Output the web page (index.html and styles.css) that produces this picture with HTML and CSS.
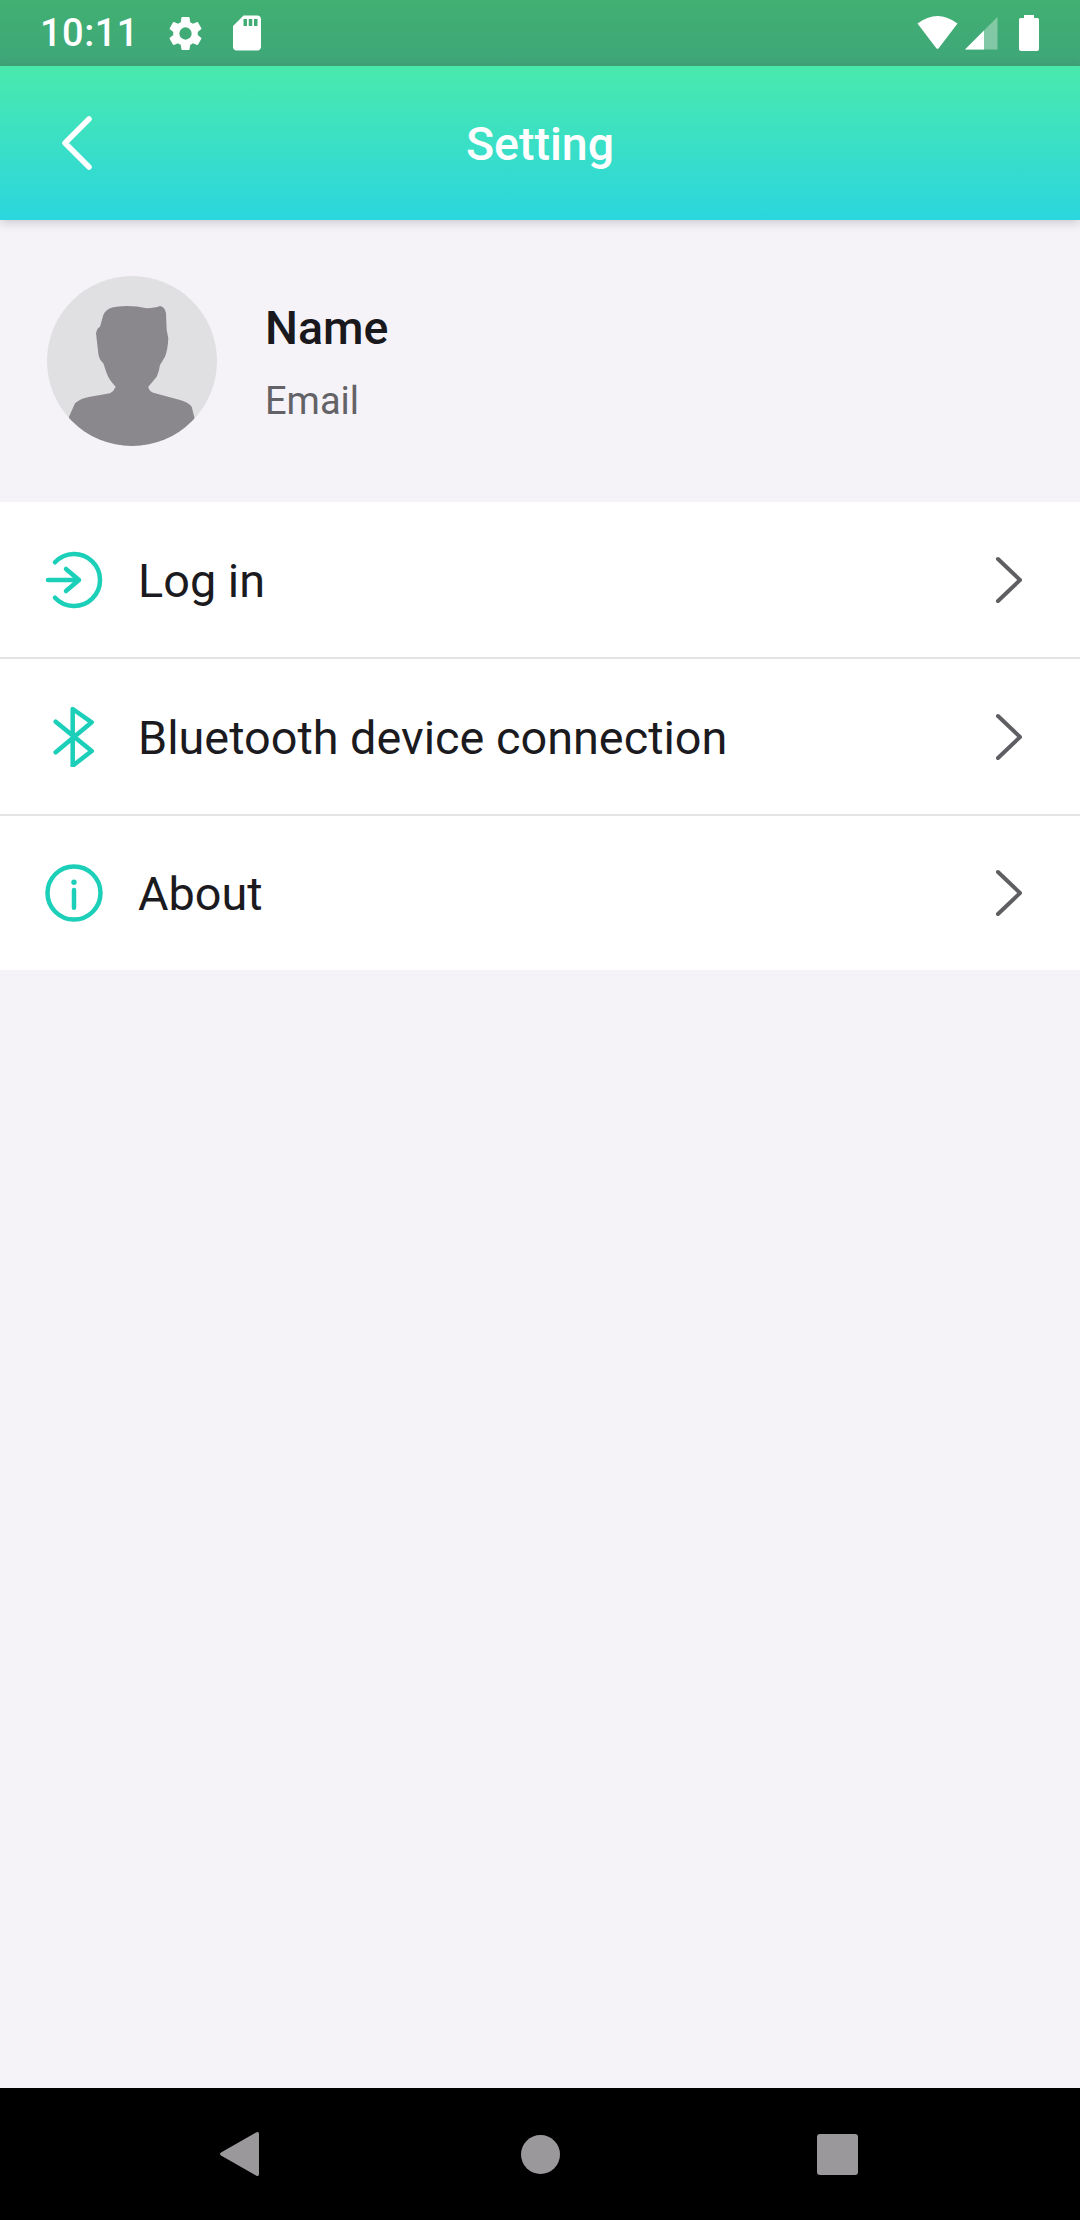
FILE: index.html
```html
<!DOCTYPE html>
<html lang="en">
  <head>
    <meta charset="utf-8">
    <title>Setting</title>
    <link rel="stylesheet" href="styles.css">
  </head>
  <body>
    <div class="page">
      <div class="statusbar">
        <span class="time">10:11</span>
        <svg class="gear" viewBox="0 0 24 24"><path d="M19.14 12.94c.04-.3.06-.61.06-.94 0-.32-.02-.64-.07-.94l2.03-1.58a.49.49 0 0 0 .12-.61l-1.92-3.32a.49.49 0 0 0-.59-.22l-2.39.96c-.5-.38-1.03-.7-1.62-.94l-.36-2.54a.48.48 0 0 0-.48-.41h-3.84a.48.48 0 0 0-.47.41l-.36 2.54c-.59.24-1.13.57-1.62.94l-2.39-.96a.48.48 0 0 0-.59.22L2.74 8.87a.47.47 0 0 0 .12.61l2.03 1.58c-.05.3-.09.63-.09.94s.02.64.07.94l-2.03 1.58a.49.49 0 0 0-.12.61l1.92 3.32c.12.22.37.29.59.22l2.39-.96c.5.38 1.03.7 1.62.94l.36 2.54c.05.24.24.41.48.41h3.84c.24 0 .44-.17.47-.41l.36-2.54c.59-.24 1.13-.56 1.62-.94l2.39.96c.22.08.47 0 .59-.22l1.92-3.32a.46.46 0 0 0-.12-.61l-2.01-1.58zM12 15.6A3.61 3.61 0 0 1 8.4 12 3.61 3.61 0 0 1 12 8.4a3.61 3.61 0 0 1 3.6 3.6 3.61 3.61 0 0 1-3.6 3.6z"/></svg>
        <svg class="sdcard" viewBox="0 0 24 24"><path d="M18 2h-8L4.02 8 4 20c0 1.1.9 2 2 2h12c1.1 0 2-.9 2-2V4c0-1.1-.9-2-2-2zm-6 6h-2V4h2v4zm3 0h-2V4h2v4zm3 0h-2V4h2v4z"/></svg>
        <div class="status-right">
          <svg class="wifi" viewBox="0 0 44 36"><path d="M1.5 8.5Q21.5 -6.5 41.5 8.5L22.7 33.2Q21.5 34.5 20.3 33.2Z"/></svg>
          <svg class="signal" viewBox="0 0 34 36"><path opacity=".35" d="M1 34.5L33.5 2V34.5Z"/><path d="M1 34.5L20 15.5V34.5Z"/></svg>
          <svg class="battery" viewBox="0 0 20 36"><path d="M5 0h10v3h3.5q1.5 0 1.5 1.5V34q0 2-2 2H2q-2 0-2-2V4.500Q0 3 1.500 3H5z"/></svg>
        </div>
      </div>

      <div class="header">
        <svg class="back" viewBox="0 0 34 56"><path d="M28 4L4 28l24 24"/></svg>
        <h1>Setting</h1>
      </div>

      <div class="profile">
        <svg class="avatar" viewBox="0 0 170 170">
          <path d="M56.300 39Q60 31 69.700 30.700Q85 29 99.700 32.300Q108 32 113 30Q118 31 119 37.300L119.700 54L121.300 62.300Q121 73 118 80.700L113 89Q112 96 109.700 100.700L101.300 110.700Q102 115 106.300 116.700L133 124Q141 126 144.700 130.700L148 144V170H22V140.700L28 127.300Q34 122 43 120.700L63 117.300Q67 115 68.700 110.700Q62 104 59.700 97.300L56.300 87.300Q52 84 51.300 77.300L49 57.300Q50 52 53 50.700Z"/>
        </svg>
        <div class="who">
          <div class="name">Name</div>
          <div class="email">Email</div>
        </div>
      </div>

      <div class="menu">
        <div class="row">
          <svg class="icon" viewBox="0 0 60 60"><path d="M11 12.300A26 26 0 1 1 11 47.700M4 30H35M22 19L35 30L22 41"/></svg>
          <span class="label">Log in</span>
          <svg class="more" viewBox="0 0 30 50"><path d="M4 4l22 21L4 46"/></svg>
        </div>
        <div class="row">
          <svg class="icon" viewBox="0 0 60 60"><path d="M11.700 14.700L47.700 44L28.700 58.700V2L47.700 15.300L11.700 45.300"/></svg>
          <span class="label">Bluetooth device connection</span>
          <svg class="more" viewBox="0 0 30 50"><path d="M4 4l22 21L4 46"/></svg>
        </div>
        <div class="row last">
          <svg class="icon" viewBox="0 0 60 60"><circle cx="30" cy="30" r="26.500"/><path d="M30 27V44.700"/><circle class="dot" cx="30" cy="19.300" r="2.700"/></svg>
          <span class="label">About</span>
          <svg class="more" viewBox="0 0 30 50"><path d="M4 4l22 21L4 46"/></svg>
        </div>
      </div>

      <div class="spacer"></div>

      <div class="navbar">
        <svg class="nav-back" viewBox="0 0 39 44"><path d="M1 20.500L36 .5Q39 -1 39 2V42Q39 45 36 43.500L1 23.500Q-1 22 1 20.500Z"/></svg>
        <div class="nav-home"></div>
        <div class="nav-recent"></div>
      </div>
    </div>
  </body>
</html>
```

FILE: styles.css
```css
* {
  box-sizing: border-box;
}
body {
  margin: 0;
  font-family: Roboto, "Liberation Sans", sans-serif;
  background-color: #f5f3f7;
}
.page {
  width: 1080px;
  height: 2220px;
  display: flex;
  flex-direction: column;
  overflow: hidden;
}

.statusbar {
  height: 66px;
  flex: none;
  display: flex;
  align-items: center;
  padding: 0 41px 0 40px;
  background: linear-gradient(#41b071, #3fa67a);
  color: #fff;
}
.statusbar svg {
  display: block;
  fill: #fff;
}
.time {
  font-size: 38px;
  font-weight: 500;
  letter-spacing: 0.5px;
  line-height: 66px;
  width: 125px;
}
.gear {
  width: 41px;
  height: 41px;
}
.sdcard {
  width: 42px;
  height: 42px;
  margin-left: 20px;
}
.status-right {
  margin-left: auto;
  display: flex;
  align-items: center;
}
.wifi {
  width: 44px;
  height: 36px;
}
.signal {
  width: 34px;
  height: 36px;
  margin-left: 4px;
}
.battery {
  width: 20px;
  height: 36px;
  margin-left: 21px;
}

.header {
  height: 154px;
  flex: none;
  position: relative;
  z-index: 2;
  display: flex;
  align-items: center;
  justify-content: center;
  background: linear-gradient(#49e9ac, #2bd6de);
  box-shadow: 0 2px 10px rgba(60, 60, 70, 0.25);
}
.back {
  position: absolute;
  left: 61px;
  top: 49px;
  width: 34px;
  height: 56px;
  fill: none;
  stroke: #fff;
  stroke-width: 5.500;
  stroke-linecap: round;
  stroke-linejoin: round;
}
.header h1 {
  margin: 2px 0 0;
  color: #fff;
  font-size: 46.500px;
  font-weight: 500;
}

.profile {
  height: 282px;
  flex: none;
  display: flex;
  align-items: center;
  padding: 0 0 0 47px;
  gap: 48px;
}
.avatar {
  width: 170px;
  height: 170px;
  border-radius: 50%;
  background-color: #e0dfe2;
  fill: #8a888c;
  margin-top: 0;
}
.who {
  margin-top: 8px;
}
.name {
  font-size: 46.500px;
  font-weight: 500;
  color: #19181c;
  line-height: 52px;
  margin-top: -6px;
}
.email {
  font-size: 38px;
  color: #636267;
  line-height: 44px;
  margin-top: 25px;
}

.menu {
  flex: none;
  background-color: #fff;
}
.row {
  height: 157px;
  display: flex;
  align-items: center;
  padding: 0 56px 0 44px;
  border-bottom: 2px solid #e4e3e6;
}
.row.last {
  height: 154px;
  border-bottom: 0;
}
.icon {
  width: 60px;
  height: 60px;
  flex: none;
  fill: none;
  stroke: #1ccfb9;
  stroke-width: 4.500;
  stroke-linecap: round;
  stroke-linejoin: round;
}
.icon .dot {
  fill: #1ccfb9;
  stroke: none;
}
.label {
  margin-left: 34px;
  margin-top: 2px;
  font-size: 46.800px;
  color: #1b1a1e;
}
.more {
  margin-left: auto;
  width: 30px;
  height: 50px;
  flex: none;
  fill: none;
  stroke: #5f5e62;
  stroke-width: 4;
  stroke-linecap: round;
  stroke-linejoin: round;
}

.spacer {
  flex: 1;
  background-color: #f5f3f7;
}

.navbar {
  height: 132px;
  flex: none;
  background-color: #000;
  display: flex;
  align-items: center;
  padding: 0 0 0 220px;
}
.nav-back {
  display: block;
  width: 39px;
  height: 44px;
  fill: #9a989b;
}
.nav-home {
  width: 39px;
  height: 39px;
  margin-left: 262px;
  border-radius: 50%;
  background-color: #9a989b;
}
.nav-recent {
  width: 41px;
  height: 41px;
  margin-left: 257px;
  border-radius: 3px;
  background-color: #9a989b;
}
```
